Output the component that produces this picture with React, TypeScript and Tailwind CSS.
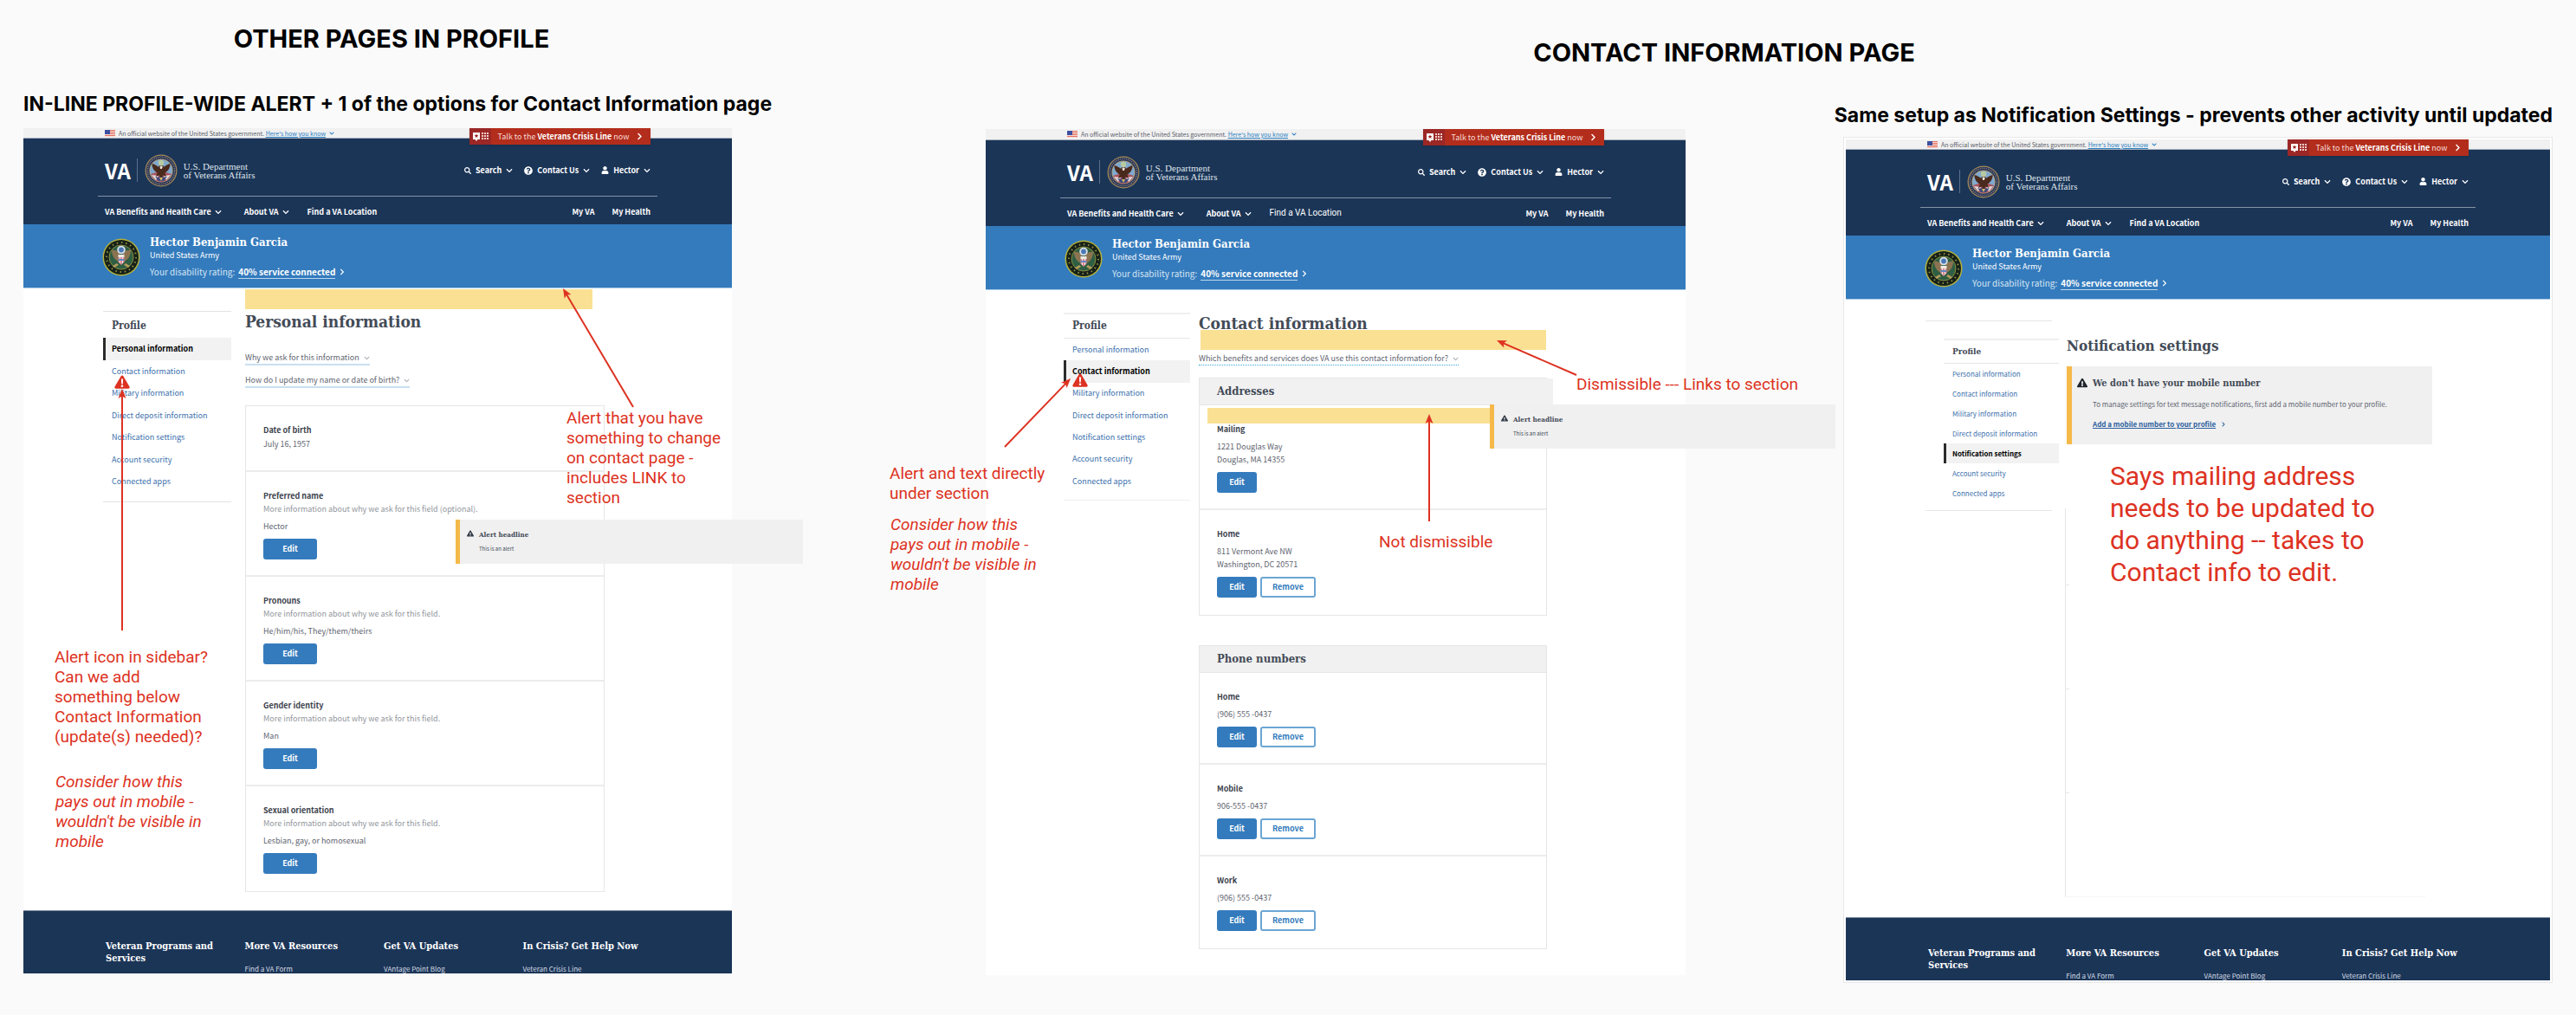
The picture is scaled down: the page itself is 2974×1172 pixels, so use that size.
import type { ReactNode } from 'react';
import {
  FaChevronDown,
  FaChevronRight,
  FaExclamationTriangle,
  FaQuestionCircle,
  FaSearch,
  FaUser,
} from 'react-icons/fa';

const sans = "font-['Noto_Sans_CJK_SC','Noto_Sans',sans-serif]";
const slab = "font-['DejaVu_Serif_Condensed','DejaVu_Serif',serif] font-bold";
const note = "font-['Roboto','Liberation_Sans',sans-serif] text-[#dd3222]";

const menu = [
  'Personal information',
  'Contact information',
  'Military information',
  'Direct deposit information',
  'Notification settings',
  'Account security',
  'Connected apps',
];

function Flag() {
  return (
    <svg className="h-2 w-3 shrink-0" viewBox="0 0 12 8" aria-hidden="true">
      <rect width="12" height="8" fill="#f6dcd8" />
      {[0, 2, 4, 6].map((y) => (
        <rect key={y} y={y} width="12" height="1" fill="#e2705f" />
      ))}
      <rect width="6" height="5" fill="#3c4fa0" />
    </svg>
  );
}

function VaSeal() {
  return (
    <svg className="size-[38px] shrink-0" viewBox="0 0 38 38" aria-hidden="true">
      <circle cx="19" cy="19" r="18.5" fill="#a98d55" />
      <circle cx="19" cy="19" r="17.3" fill="#25335c" />
      <circle cx="19" cy="19" r="15.6" fill="none" stroke="#8c8172" strokeWidth="1.4" strokeDasharray="1.2 1.1" />
      <circle cx="19" cy="19" r="13.6" fill="#c0a060" />
      <circle cx="19" cy="19" r="12.8" fill="#7fa9cf" />
      <circle cx="19" cy="10" r="3.2" fill="#b9c9a0" />
      <path d="M7 23c3 6 7 9 12 9s9-3 12-9l-6-2H13z" fill="#a9545f" />
      <path d="M8 24l8 1-3 5zM30 24l-8 1 3 5z" fill="#e4dcdc" />
      <path d="M12 26l4 1 3-3 3 3 4-1-4 5h-6z" fill="#3b4a80" />
      <path d="M19 13.5c1.500-1 3 0 3 1.200 2.600-1.600 5.200-3.700 7.600-3.500-.3 5.300-2.600 8.300-6.200 10.300l1.600 4.500-3.500-1.800L19 28l-2.200-3.800-3.800 1.800 1.700-4.500c-3.600-2-6-5-6.300-10.300 2.600-.2 5.100 1.900 7.700 3.500.2-1.200 1.500-2 2.900-1.200z" fill="#4a2a1d" />
      <path d="M17.500 14.500c.5-1.300 3-1.200 3.300.2l-1 2.300h-1.700z" fill="#e8e2d6" />
      <path d="M17 27h4l-2 4z" fill="#d9b95c" />
    </svg>
  );
}

function ArmySeal() {
  return (
    <svg className="size-[44px] shrink-0" viewBox="0 0 44 44" aria-hidden="true">
      <circle cx="22" cy="22" r="21.500" fill="#b5b23c" />
      <circle cx="22" cy="22" r="20" fill="#16211a" />
      <circle cx="22" cy="22" r="17" fill="none" stroke="#8c8a3a" strokeWidth="2" strokeDasharray="1.500 3.800" />
      <circle cx="22" cy="22" r="14" fill="#2e5e43" stroke="#a5a040" strokeWidth="0.8" />
      <path d="M20 17c-3-3-7-4-9-3 0 6 3 11 8 13zM24 17c3-3 7-4 9-3 0 6-3 11-8 13z" fill="#8b7351" />
      <path d="M17 29l-5 3 2 2 5-3zM27 29l5 3-2 2-5-3z" fill="#b39a5c" />
      <circle cx="22" cy="13.500" r="4.800" fill="#d9dfe8" />
      <circle cx="22" cy="13.500" r="2.900" fill="#4a78b8" />
      <path d="M18.500 19h7v3h-7z" fill="#efe9e4" />
      <path d="M18.500 22h7v5.500L22 31l-3.500-3.500z" fill="#d58a92" />
      <path d="M20 22h1v7h-1zM23 22h1v7h-1z" fill="#f4e5e3" />
      <path d="M18.500 24h7v2h-7z" fill="#5f86c0" />
    </svg>
  );
}

function CrisisIcon() {
  return (
    <svg className="h-3 w-[18px]" viewBox="0 0 18 12" aria-hidden="true">
      <path d="M0 1h8v8H5.500L4 11 2.500 9H0z" fill="#fff" />
      <path d="M4 2.500l.7 1.600 1.700.1-1.300 1.100.4 1.700L4 6.100 2.500 7l.4-1.700-1.300-1.100 1.700-.1z" fill="#9b2321" />
      {[10, 13, 16].map((x) =>
        [1, 4, 7].map((y) => <rect key={`${x}-${y}`} x={x} y={y} width="2" height="2" fill="#f3cfca" />),
      )}
    </svg>
  );
}

function SiteHeader({ bannerClass, plainLocation = false }: { bannerClass: string; plainLocation?: boolean }) {
  return (
    <header className={sans}>
      <div className={`flex justify-between border-b border-[#a4aebb] bg-[#f1f1f1] px-[94px] ${bannerClass}`}>
        <p className="flex items-center gap-1 whitespace-nowrap text-[7px] leading-[10px] text-[#5b616b]">
          <Flag />
          <span>
            An official website of the United States government.{' '}
            <a href="#how" className="text-[#2a7fc1] underline">
              Here's how you know
            </a>
          </span>
          <FaChevronDown className="size-[6px] text-[#2a7fc1]" />
        </p>
        <a
          href="#crisis"
          className="relative z-10 flex h-[19px] w-[209px] shrink-0 items-center bg-[#b32d1c] text-[9px] leading-[19px] text-[#f6dcd8] shadow-sm"
        >
          <span className="flex h-full w-[25px] shrink-0 items-center justify-center bg-[#9b2726]">
            <CrisisIcon />
          </span>
          <span className="flex-1 whitespace-nowrap text-center">
            Talk to the <b className="text-white">Veterans Crisis Line</b> now
          </span>
          <FaChevronRight className="mr-2 size-[9px] text-white" />
        </a>
      </div>

      <div className="h-[99px] bg-[#1b3557] px-[86px] text-[9px] font-bold text-white">
        <div className="flex h-[67px] items-center justify-between border-b border-[#8492a6] px-2 pt-[7px]">
          <a href="#home" className="flex items-center">
            <span className="text-[24px] font-bold leading-7">VA</span>
            <span className="ml-[7px] h-[27px] w-px bg-[#5d708a]" />
            <span className="ml-2">
              <VaSeal />
            </span>
            <span className="ml-[7px] block font-['Liberation_Serif',serif] text-[11px] font-normal leading-[10px] text-[#dfe4ea]">
              U.S. Department
              <br />
              of Veterans Affairs
            </span>
          </a>
          <div className="flex items-center gap-[13px]">
            <button type="button" className="flex items-center gap-[5px]">
              <FaSearch className="size-2" />
              Search
              <FaChevronDown className="size-2" />
            </button>
            <button type="button" className="flex items-center gap-[5px]">
              <FaQuestionCircle className="size-[10px]" />
              Contact Us
              <FaChevronDown className="size-2" />
            </button>
            <button type="button" className="flex items-center gap-[5px]">
              <FaUser className="size-[9px]" />
              Hector
              <FaChevronDown className="size-2" />
            </button>
          </div>
        </div>
        <nav className="flex h-8 items-center px-2 pt-1" aria-label="Main">
          <button type="button" className="flex items-center gap-1">
            VA Benefits and Health Care
            <FaChevronDown className="size-2" />
          </button>
          <button type="button" className="ml-[26px] flex items-center gap-1">
            About VA
            <FaChevronDown className="size-2" />
          </button>
          {plainLocation ? (
            <a href="#location" className="ml-[21px] pb-1 font-['Roboto',sans-serif] text-[10px] font-normal">
              Find a VA Location
            </a>
          ) : (
            <a href="#location" className="ml-[21px]">
              Find a VA Location
            </a>
          )}
          <a href="#my-va" className="ml-auto">
            My VA
          </a>
          <a href="#my-health" className="ml-5">
            My Health
          </a>
        </nav>
      </div>

      <div className="flex h-[74px] items-center border-b border-[#a9cbe6] bg-[#347bbd] px-[91px] pt-0.5 text-white">
        <ArmySeal />
        <div className="ml-[11px]">
          <p className={`${slab} text-[13px] leading-4`}>Hector Benjamin Garcia</p>
          <p className="text-[9px] leading-[14px]">United States Army</p>
          <p className="mt-[5px] flex items-center whitespace-nowrap text-[10px] leading-[14px] text-[#d4e5f3]">
            Your disability rating:
            <a href="#rating" className="ml-1 border-b border-[#bcd7ec] font-bold text-white">
              40% service connected
            </a>
            <FaChevronRight className="ml-1 size-2 text-white" />
          </p>
        </div>
      </div>
    </header>
  );
}

interface SideMenuProps {
  active: string;
  titleClass: string;
  listClass: string;
  textClass: string;
}

function SideMenu({ active, titleClass, listClass, textClass }: SideMenuProps) {
  return (
    <nav aria-label="Profile" className={`${sans} ${textClass}`}>
      <h2 className={`${slab} pl-2.5 text-[#434b57] ${titleClass}`}>Profile</h2>
      <ul className={`grid auto-rows-fr ${listClass}`}>
        {menu.map((item) =>
          item === active ? (
            <li key={item} className="flex items-center border-l-[3px] border-[#2b2b2b] bg-[#f2f2f2] pl-[7px] font-bold text-black">
              <a href="#profile" aria-current="page">
                {item}
              </a>
            </li>
          ) : (
            <li key={item} className="flex items-center pl-2.5 text-[#3c70ac]">
              <a href="#profile">{item}</a>
            </li>
          ),
        )}
      </ul>
    </nav>
  );
}

function EditButton({ wide = false }: { wide?: boolean }) {
  return (
    <button
      type="button"
      className={`h-6 rounded-[3px] bg-[#347bbd] text-center text-[9px] font-bold leading-6 text-white ${wide ? 'w-[62px]' : 'w-[46px]'}`}
    >
      Edit
    </button>
  );
}

function RemoveButton() {
  return (
    <button
      type="button"
      className="h-6 w-16 rounded-[3px] border-2 border-[#6ba6d4] text-center text-[9px] font-bold leading-5 text-[#347bbd]"
    >
      Remove
    </button>
  );
}

function Row({ label, hint, lines, children }: { label: string; hint?: string; lines: string[]; children?: ReactNode }) {
  return (
    <section
      className={`border-b-2 border-[#ececec] px-5 pt-5 text-[9px] text-[#5f6570] last:border-b-0 last:pb-5 ${
        children ? 'pb-[18px]' : 'pb-[23px]'
      }`}
    >
      <h4 className="font-bold leading-4 text-[#3d434d]">{label}</h4>
      {hint && <p className="leading-[14px] text-[#92969c]">{hint}</p>}
      <div className={hint ? 'mt-[5px]' : children ? 'mt-1' : ''}>
        {lines.map((line) => (
          <p key={line} className="leading-[15px]">
            {line}
          </p>
        ))}
      </div>
      {children && <div className="mt-[7px] flex gap-1">{children}</div>}
    </section>
  );
}

function Footer() {
  const columns = [
    ['Veteran Programs and Services', ''],
    ['More VA Resources', 'Find a VA Form'],
    ['Get VA Updates', 'VAntage Point Blog'],
    ['In Crisis? Get Help Now', 'Veteran Crisis Line'],
  ];
  return (
    <footer className={`${sans} grid h-[73px] grid-cols-4 overflow-hidden border-t border-[#7d8ca0] bg-[#1b3557] pl-[95px] pr-[81px] pt-[34px] text-white`}>
      {columns.map(([title, link]) => (
        <div key={title}>
          <h3 className={`${slab} w-[140px] text-[11px] leading-[14px]`}>{title}</h3>
          {link && (
            <a href="#footer" className="mt-3 block text-[8px] leading-[14px] text-[#d3dae3]">
              {link}
            </a>
          )}
        </div>
      ))}
    </footer>
  );
}

function Expander({ children, dotted = false }: { children: string; dotted?: boolean }) {
  return (
    <button
      type="button"
      className={`flex items-center gap-[5px] whitespace-nowrap text-[9px] leading-[14px] text-[#5f6570] ${
        dotted ? 'border-b border-dotted border-[#39a7da]' : 'border-b-2 border-[#c9dff0]'
      }`}
    >
      {children}
      <FaChevronDown className="size-[7px] text-[#aab0b6]" />
    </button>
  );
}

function AlertSample({ place }: { place: string }) {
  return (
    <aside className={`absolute flex h-[51px] border-l-[5px] border-[#f5b94a] bg-[#f0f0f0] pl-2 pt-[10px] ${place}`}>
      <FaExclamationTriangle className="mt-0.5 size-2 text-[#323a45]" />
      <div className="ml-1.5">
        <h4 className={`${slab} text-[8px] leading-[14px] text-[#434b57]`}>Alert headline</h4>
        <p className={`${sans} mt-[3px] text-[6px] leading-[14px] text-[#434b57]`}>This is an alert</p>
      </div>
    </aside>
  );
}

/* Red pointer drawn from (x1, y1) to its tip at (x2, y2) on the board's own origin. */
function Arrow({ x1, y1, x2, y2 }: { x1: number; y1: number; x2: number; y2: number }) {
  const angle = (Math.atan2(y2 - y1, x2 - x1) * 180) / Math.PI;
  const length = Math.hypot(x2 - x1, y2 - y1);
  return (
    <svg className="pointer-events-none absolute left-0 top-0 size-px overflow-visible" aria-hidden="true">
      <g transform={`translate(${x2} ${y2}) rotate(${angle})`} fill="#dd3222">
        <rect x={-length} y="-1" width={length - 6} height="2" />
        <path d="M0 0L-11 -4.500L-8.500 0L-11 4.500z" />
      </g>
    </svg>
  );
}

function Warning({ place }: { place: string }) {
  return (
    <svg className={`absolute h-4 w-[18px] ${place}`} viewBox="0 0 18 16" aria-hidden="true">
      <path d="M9 0.500c.7 0 1.200.3 1.500.9l7 12.200c.6 1-.1 2.100-1.200 2.100H1.700c-1.100 0-1.800-1.100-1.200-2.100l7-12.200c.3-.6.8-.9 1.500-.9z" fill="#dd3222" />
      <path d="M7.900 4.500h2.200l-.3 6H8.200z" fill="#fff" />
      <circle cx="9" cy="12.700" r="1.300" fill="#fff" />
    </svg>
  );
}

function MobileNote({ place }: { place: string }) {
  return (
    <p className={`${note} absolute w-[182px] text-[19px] italic leading-[23px] ${place}`}>
      Consider how this pays out in mobile - wouldn't be visible in mobile
    </p>
  );
}

function PersonalInformation() {
  const hint = 'More information about why we ask for this field.';
  return (
    <article className="relative bg-white">
      <SiteHeader bannerClass="h-3" />
      <div className="flex gap-4 pb-[21px] pl-[92px] pr-[147px]">
        <div className="mt-[26px] h-[221px] w-[148px] shrink-0 border-y border-[#e3e3e3]">
          <SideMenu
            active="Personal information"
            titleClass="pt-0.5 text-[12px] leading-7"
            listClass="h-[179px]"
            textClass="text-[9px]"
          />
        </div>
        <main className={`${sans} min-w-0 flex-1 pt-6`}>
          <h1 className={`${slab} whitespace-nowrap text-[19px] leading-7 text-[#434b57]`}>Personal information</h1>
          <div className="mt-[21px] flex flex-col items-start gap-[10px]">
            <Expander>Why we ask for this information</Expander>
            <Expander>How do I update my name or date of birth?</Expander>
          </div>
          <div className="mt-5 border border-[#e6e6e6]">
            <Row label="Date of birth" lines={['July 16, 1957']} />
            <Row label="Preferred name" hint="More information about why we ask for this field (optional)." lines={['Hector']}>
              <EditButton wide />
            </Row>
            <Row label="Pronouns" hint={hint} lines={['He/him/his, They/them/theirs']}>
              <EditButton wide />
            </Row>
            <Row label="Gender identity" hint={hint} lines={['Man']}>
              <EditButton wide />
            </Row>
            <Row label="Sexual orientation" hint={hint} lines={['Lesbian, gay, or homosexual']}>
              <EditButton wide />
            </Row>
          </div>
        </main>
      </div>
      <Footer />

      <div className="absolute left-64 top-[186px] h-[23px] w-[401px] bg-[#fae093]" />
      <Warning place="left-[105px] top-[285px]" />
      <Arrow x1={114} y1={580} x2={114} y2={301} />
      <Arrow x1={704} y1={322} x2={623} y2={185} />
      <p className={`${note} absolute left-[627px] top-[323px] w-[190px] text-[19px] leading-[23px]`}>
        Alert that you have something to change on contact page - includes LINK to section
      </p>
      <AlertSample place="left-[499px] top-[452px] w-[401px]" />
      <p className={`${note} absolute left-[36px] top-[599px] w-[190px] text-[19px] leading-[23px]`}>
        Alert icon in sidebar? Can we add something below Contact Information (update(s) needed)?
      </p>
      <MobileNote place="left-[37px] top-[743px]" />
    </article>
  );
}

function ContactInformation() {
  const phones = [
    ['Home', '(906) 555 -0437'],
    ['Mobile', '906-555 -0437'],
    ['Work', '(906) 555 -0437'],
  ];
  return (
    <article className="relative bg-white">
      <SiteHeader bannerClass="h-[13px]" plainLocation />
      <div className="flex gap-[10px] pb-[30px] pl-[90px] pr-[160px]">
        <div className="mt-[26px] h-[217px] w-[146px] shrink-0 border-b border-t-2 border-[#efefef]">
          <SideMenu
            active="Contact information"
            titleClass="border-b border-[#e6e6e6] text-[12px] leading-[27px]"
            listClass="h-[177px]"
            textClass="text-[9px]"
          />
        </div>
        <main className={`${sans} min-w-0 flex-1 pt-6`}>
          <h1 className={`${slab} whitespace-nowrap text-[19px] leading-7 text-[#434b57]`}>Contact information</h1>
          <div className="mt-5 flex">
            <Expander dotted>Which benefits and services does VA use this contact information for?</Expander>
          </div>
          <section className="mt-[14px] border border-[#e6e6e6]">
            <h2 className={`${slab} -mr-2 border-b border-[#e6e6e6] bg-[#f1f1f1] pl-5 text-[13px] leading-[30px] text-[#434b57]`}>
              Addresses
            </h2>
            <Row label="Mailing" lines={['1221 Douglas Way', 'Douglas, MA 14355']}>
              <EditButton />
            </Row>
            <Row label="Home" lines={['811 Vermont Ave NW', 'Washington, DC 20571']}>
              <EditButton />
              <RemoveButton />
            </Row>
          </section>
          <section className="mt-[34px] border border-[#e6e6e6]">
            <h2 className={`${slab} border-b border-[#e6e6e6] bg-[#f1f1f1] pl-5 text-[13px] leading-[30px] text-[#434b57]`}>
              Phone numbers
            </h2>
            {phones.map(([label, value]) => (
              <Row key={label} label={label} lines={[value]}>
                <EditButton />
                <RemoveButton />
              </Row>
            ))}
          </section>
        </main>
      </div>

      <div className="absolute left-[248px] top-[232px] h-[23px] w-[399px] bg-[#fae093]" />
      <div className="absolute left-64 top-[322px] h-[18px] w-[330px] bg-[#fae093]" />
      <Warning place="left-[100px] top-[282px]" />
      <Arrow x1={22} y1={367} x2={98} y2={288} />
      <p className={`${note} absolute -left-[111px] top-[386px] w-[190px] text-[19px] leading-[23px]`}>
        Alert and text directly under section
      </p>
      <MobileNote place="-left-[110px] top-[445px]" />
      <Arrow x1={682} y1={284} x2={590} y2={244} />
      <p className={`${note} absolute left-[682px] top-[283px] whitespace-nowrap text-[19px] leading-[23px]`}>
        Dismissible --- Links to section
      </p>
      <Arrow x1={512} y1={453} x2={512} y2={329} />
      <p className={`${note} absolute left-[454px] top-[465px] whitespace-nowrap text-[19px] leading-[23px]`}>Not dismissible</p>
      <AlertSample place="left-[582px] top-[318px] w-[399px]" />
    </article>
  );
}

function NotificationSettings() {
  return (
    <article className="relative border border-[#e8e8e8] bg-white p-0.5">
      <SiteHeader bannerClass="h-3" />
      <div className="flex gap-[17px] pb-[23px] pl-[92px] pr-[136px]">
        <div className="mt-6 h-[220px] w-[146px] shrink-0 border-y border-[#e6e6e6]">
          <div className="-mr-2 ml-[21px] mt-5 border-t-2 border-[#efefef]">
            <SideMenu
              active="Notification settings"
              titleClass="border-b border-[#e6e6e6] text-[10px] leading-[26px]"
              listClass="h-[161px]"
              textClass="text-[8px]"
            />
          </div>
        </div>
        <main className={`${sans} min-w-0 flex-1 pt-10`}>
          <h1 className={`${slab} whitespace-nowrap text-[17px] leading-[26px] text-[#434b57]`}>Notification settings</h1>
          <div className="mt-[11px] flex h-[90px] border-l-[6px] border-[#f5b94a] bg-[#f0f0f0] pl-1.5 pt-[11px] text-[8px]">
            <FaExclamationTriangle className="mt-0.5 size-3 text-[#1f242c]" />
            <div className="ml-1.5 whitespace-nowrap">
              <h3 className={`${slab} text-[11px] leading-[18px] text-[#434b57]`}>We don't have your mobile number</h3>
              <p className="mt-2 leading-[14px] text-[#5f6570]">
                To manage settings for text message notifications, first add a mobile number to your profile.
              </p>
              <a href="#mobile" className="mt-[9px] flex items-center gap-1.5 font-bold leading-[14px] text-[#2c5f9e] underline">
                Add a mobile number to your profile
                <FaChevronRight className="size-1.5" />
              </a>
            </div>
          </div>
          <div className="-ml-0.5 mr-2 mt-[74px] border-b border-l border-b-[#f6f6f6] border-l-[#e6e6e6] pt-[88px]">
            {[0, 1, 2].map((tick) => (
              <div key={tick} className="h-[120px] w-1 border-t border-[#e6e6e6]" />
            ))}
          </div>
        </main>
      </div>
      <Footer />
      <p className={`${note} absolute left-[307px] top-[372px] w-[330px] text-[30px] leading-[37px]`}>
        Says mailing address needs to be updated to do anything -- takes to Contact info to edit.
      </p>
    </article>
  );
}

export default function App() {
  const heading = "font-['Inter','Liberation_Sans',sans-serif] font-bold text-black whitespace-nowrap";
  return (
    <div className="flex min-h-screen items-start overflow-x-hidden bg-[#fafafa] pb-9 pl-[27px] pr-[27px]">
      <section className="min-w-0 grow-[818] basis-0">
        <h1 className={`${heading} mt-7 pl-8 text-center text-[29px] leading-[34px]`}>OTHER PAGES IN PROFILE</h1>
        <h2 className={`${heading} mb-[14px] mt-11 text-[23px] leading-7`}>
          IN-LINE PROFILE-WIDE ALERT + 1 of the options for Contact Information page
        </h2>
        <PersonalInformation />
      </section>

      <section className="ml-[293px] min-w-0 grow-[1809] basis-0">
        <h1 className={`${heading} mt-11 pr-[104px] text-center text-[29px] leading-[34px]`}>CONTACT INFORMATION PAGE</h1>
        <div className="flex items-start gap-[182px]">
          <div className="min-w-0 grow-[808] basis-0 pt-[71px]">
            <ContactInformation />
          </div>
          <div className="flex min-w-0 grow-[819] basis-0 flex-col">
            <h2 className={`${heading} mb-[11px] mt-[41px] self-end text-[23px] leading-7`}>
              Same setup as Notification Settings - prevents other activity until updated
            </h2>
            <NotificationSettings />
          </div>
        </div>
      </section>
    </div>
  );
}
